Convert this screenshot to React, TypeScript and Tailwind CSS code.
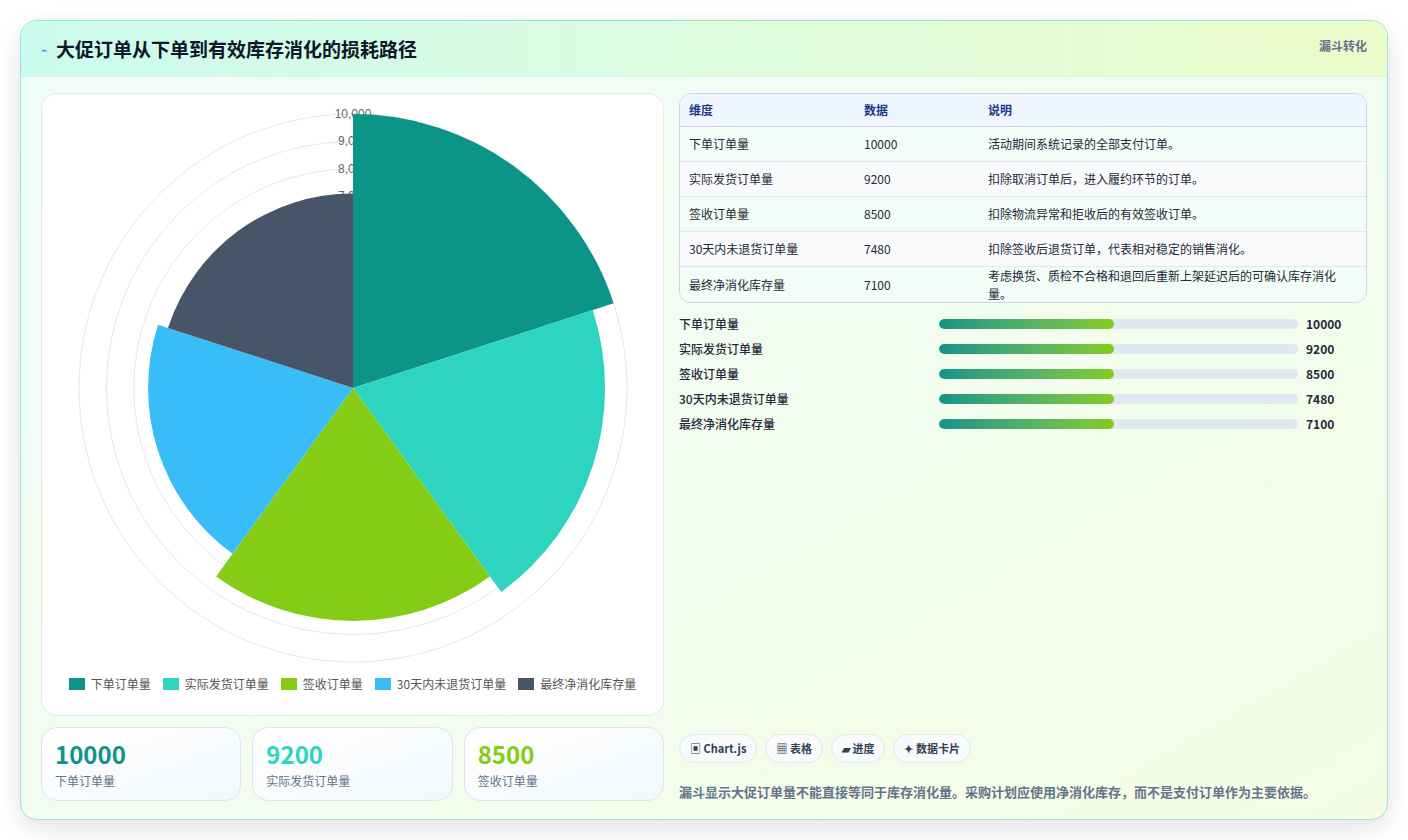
const rows = [
  { name: "下单订单量", value: 10000, color: "#0d9488", desc: "活动期间系统记录的全部支付订单。" },
  { name: "实际发货订单量", value: 9200, color: "#2dd4bf", desc: "扣除取消订单后，进入履约环节的订单。" },
  { name: "签收订单量", value: 8500, color: "#84cc16", desc: "扣除物流异常和拒收后的有效签收订单。" },
  { name: "30天内未退货订单量", value: 7480, color: "#38bdf8", desc: "扣除签收后退货订单，代表相对稳定的销售消化。" },
  { name: "最终净消化库存量", value: 7100, color: "#475569", desc: "考虑换货、质检不合格和退回后重新上架延迟后的可确认库存消化量。" },
];

const font = { fontFamily: '"Noto Sans CJK SC", "Noto Sans", sans-serif' };

function PolarChart() {
  const cx = 311, cy = 294, R = 274;
  const pt = (r: number, deg: number) => {
    const a = (deg * Math.PI) / 180;
    return `${cx + r * Math.cos(a)},${cy + r * Math.sin(a)}`;
  };
  return (
    <svg width="622" height="580" viewBox="0 0 622 580">
      {[1, 2, 3, 4, 5, 6, 7, 8, 9, 10].map((k) => (
        <circle key={k} cx={cx} cy={cy} r={(R * k) / 10} fill="none" stroke="#e5e7eb" strokeWidth="1" />
      ))}
      {[10, 9, 8, 7].map((k) => (
        <text key={k} x={cx} y={cy - (R * k) / 10 + 4} textAnchor="middle" fontSize="12" fill="#666" fontFamily="Liberation Sans, sans-serif">
          {k === 10 ? "10,000" : `${k},000`}
        </text>
      ))}
      {rows.map((r, i) => {
        const rad = (R * r.value) / 10000;
        const a0 = -90 + i * 72, a1 = a0 + 72;
        return <path key={i} d={`M${cx},${cy} L${pt(rad, a0)} A${rad},${rad} 0 0 1 ${pt(rad, a1)} Z`} fill={r.color} />;
      })}
    </svg>
  );
}

export default function App() {
  return (
    <div className="w-[1408px] h-[840px] bg-white p-5" style={font}>
      <div className="h-[800px] rounded-2xl border border-[#99e6d4] shadow-[0_8px_24px_rgba(15,23,42,0.12)] overflow-hidden flex flex-col bg-gradient-to-br from-[#effdfa] to-[#f4fde4]">
        <div className="h-14 shrink-0 flex items-start justify-between px-5 pt-4 bg-gradient-to-r from-[#ccfbef] to-[#ecfccb] border-b border-[#dcefe6]">
          <div className="flex items-center gap-2">
            <span className="text-[11px] text-[#3b82f6]">⌁</span>
            <span className="text-[19px] font-bold text-[#0f172a] leading-6">大促订单从下单到有效库存消化的损耗路径</span>
          </div>
          <span className="text-[12px] font-bold text-[#64748b]">漏斗转化</span>
        </div>
        <div className="flex-1 flex gap-[15px] px-5 pt-4 pb-[18px]">
          <div className="w-[623px] flex flex-col gap-[11px]">
            <div className="h-[623px] rounded-2xl bg-white border border-[#e2ece9] flex flex-col items-center">
              <PolarChart />
              <div className="flex gap-3 text-[12px] text-[#555] mt-[1px]">
                {rows.map((r) => (
                  <div key={r.name} className="flex items-center gap-[6px]">
                    <span className="w-[16px] h-[12px]" style={{ background: r.color }} />
                    {r.name}
                  </div>
                ))}
              </div>
            </div>
            <div className="flex gap-[11px]">
              {rows.slice(0, 3).map((r) => (
                <div key={r.name} className="flex-1 h-[74px] rounded-2xl border border-[#dbe7ef] bg-gradient-to-br from-white to-[#f3f8fc] px-[13px] pt-[10px]">
                  <div className="text-[24px] font-bold leading-8" style={{ color: r.color }}>{r.value}</div>
                  <div className="text-[12px] text-[#64748b] mt-[2px]">{r.name}</div>
                </div>
              ))}
            </div>
          </div>
          <div className="flex-1 flex flex-col">
            <div className="rounded-xl border border-[#c9d6e3] overflow-hidden bg-white/60 text-[12px]">
              <div className="grid grid-cols-[175px_124px_1fr] h-[33px] items-center px-[9px] bg-[#eff6ff] text-[#1e3a8a] font-bold border-b border-[#c9d6e3]">
                <span>维度</span><span>数据</span><span>说明</span>
              </div>
              {rows.map((r, i) => (
                <div key={r.name} className={`grid grid-cols-[175px_124px_1fr] h-[35px] items-center px-[9px] text-[#1f2937] ${i < 4 ? "border-b border-[#e2e8f0]" : ""} ${i % 2 ? "bg-[#f8fafc]" : "bg-[#f1fdf6]"}`}>
                  <span>{r.name}</span><span>{r.value}</span><span>{r.desc}</span>
                </div>
              ))}
            </div>
            <div className="flex flex-col gap-[7px] mt-[12px]">
              {rows.map((r) => (
                <div key={r.name} className="flex items-center h-[18px] text-[12px]">
                  <span className="w-[260px] text-[#1f2937] font-medium">{r.name}</span>
                  <div className="w-[359px] h-[10px] rounded-full bg-[#e2e8f0] overflow-hidden">
                    <div className="h-full rounded-full bg-gradient-to-r from-[#0d9488] to-[#84cc16]" style={{ width: "48.7%" }} />
                  </div>
                  <span className="ml-2 font-bold text-[#1f2937]">{r.value}</span>
                </div>
              ))}
            </div>
            <div className="flex-1" />
            <div className="flex gap-[8px] text-[11px] font-bold text-[#334155]">
              {["▣ Chart.js", "▦ 表格", "▰ 进度", "✦ 数据卡片"].map((t) => (
                <span key={t} className="h-[29px] px-[10px] flex items-center rounded-full border border-[#e2e8f0] bg-[#f8fafc]">{t}</span>
              ))}
            </div>
            <p className="mt-[19px] text-[13px] font-bold text-[#64748b]">漏斗显示大促订单量不能直接等同于库存消化量。采购计划应使用净消化库存，而不是支付订单作为主要依据。</p>
          </div>
        </div>
      </div>
    </div>
  );
}
